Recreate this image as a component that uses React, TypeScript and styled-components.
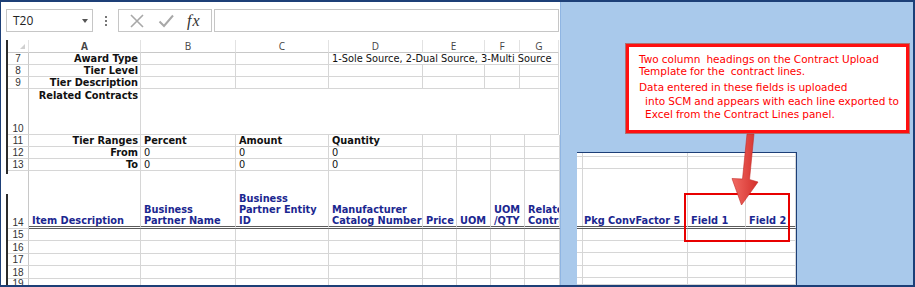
import React from 'react';
import styled, { createGlobalStyle } from 'styled-components';

const GlobalStyle = createGlobalStyle`
  html, body {
    margin: 0;
    padding: 0;
    background: #fff;
  }
  body {
    font-family: 'DejaVu Sans', Verdana, sans-serif;
  }
`;

const CELL_FONT = "'DejaVu Sans', Verdana, sans-serif";
const UI_FONT = "'Open Sans', 'Liberation Sans', sans-serif";

const TOP_COLS = '21px 112px 95px 93px 94px 62px 35px 39px';
const BOTTOM_COLS = '21px 112px 95px 93px 94px 34px 34px 34px 35px';
const SNIPPET_COLS = '4px 107px 58px 50px';

const Frame = styled.div`
  position: relative;
  width: 915px;
  height: 287px;
  box-sizing: border-box;
  border: 2px solid #1d3f77;
  border-left-width: 1px;
  display: flex;
  overflow: hidden;
  background: #fff;
`;

const SheetPane = styled.div`
  width: 559px;
  flex-shrink: 0;
  display: flex;
  flex-direction: column;
  overflow: hidden;
`;

const FormulaBar = styled.div`
  height: 38px;
  flex-shrink: 0;
  box-sizing: border-box;
  padding: 7px 1px 0 5px;
  display: flex;
  align-items: flex-start;
`;

const NameBox = styled.div`
  width: 87px;
  height: 23px;
  box-sizing: border-box;
  border: 1px solid #c6c6c6;
  display: flex;
  align-items: center;
  justify-content: space-between;
  padding: 0 4px 0 6px;
  font: 12px ${UI_FONT};
  color: #222;
`;

const Caret = styled.span`
  width: 0;
  height: 0;
  border-left: 3px solid transparent;
  border-right: 3px solid transparent;
  border-top: 4px solid #555;
`;

const Grip = styled.div`
  width: 25px;
  height: 23px;
  display: flex;
  flex-direction: column;
  align-items: center;
  justify-content: center;
  gap: 2px;

  span {
    width: 2px;
    height: 2px;
    background: #777;
  }
`;

const ActionBox = styled.div`
  width: 94px;
  height: 23px;
  box-sizing: border-box;
  border: 1px solid #c6c6c6;
  display: flex;
  align-items: center;
  justify-content: space-around;
  padding: 0 4px;
`;

const Fx = styled.span`
  font: italic 16px 'Liberation Serif', serif;
  color: #333;
  letter-spacing: 1px;
`;

const FormulaInput = styled.div`
  flex: 1;
  height: 23px;
  box-sizing: border-box;
  margin-left: 2px;
  border: 1px solid #c6c6c6;
`;

const Sheet = styled.div`
  flex: 1;
  min-height: 0;
  display: flex;
  padding-left: 5px;
  overflow: hidden;
`;

const Ruler = styled.div`
  width: 2px;
  flex-shrink: 0;
  background: linear-gradient(
    to bottom,
    #2b2b2b 0 134px,
    transparent 134px 154px,
    #2b2b2b 154px
  );
`;

const Grid = styled.div`
  flex: 1;
  display: flex;
  flex-direction: column;
`;

const Row = styled.div<{ $cols: string; $h?: number }>`
  display: grid;
  grid-template-columns: ${({ $cols }) => $cols};
  height: ${({ $h }) => ($h ? `${$h}px` : 'auto')};
  flex: ${({ $h }) => ($h ? '0 0 auto' : '1')};
`;

const ColHead = styled.div<{ $active?: boolean }>`
  box-sizing: border-box;
  border-right: 1px solid #e2e2e2;
  border-bottom: 1px solid #c8c8c8;
  display: flex;
  align-items: center;
  justify-content: center;
  font: ${({ $active }) => ($active ? 700 : 400)} 10px/1 ${UI_FONT};
  color: #444;
`;

const Corner = styled(ColHead)`
  justify-content: flex-end;
  align-items: flex-end;
  padding: 0 3px 3px 0;

  &::after {
    content: '';
    border-left: 5px solid transparent;
    border-bottom: 5px solid #d0d0d0;
  }
`;

type Align = 'left' | 'right' | 'center';

const Cell = styled.div<{
  $align?: Align;
  $top?: boolean;
  $bold?: boolean;
  $navy?: boolean;
  $span?: number;
  $double?: boolean;
}>`
  box-sizing: border-box;
  min-width: 0;
  border-right: 1px solid #d6d6d6;
  border-bottom: ${({ $double }) => ($double ? '3px double #5a5a5a' : '1px solid #d6d6d6')};
  grid-column: ${({ $span }) => ($span ? `span ${$span}` : 'auto')};
  display: flex;
  align-items: ${({ $top }) => ($top ? 'flex-start' : 'flex-end')};
  justify-content: ${({ $align }) =>
    $align === 'right' ? 'flex-end' : $align === 'center' ? 'center' : 'flex-start'};
  text-align: ${({ $align }) => $align || 'left'};
  padding: ${({ $top }) => ($top ? '1px 2px 0 3px' : '0 2px 0 3px')};
  font: ${({ $bold }) => ($bold ? 700 : 400)} 9.8px/11px ${CELL_FONT};
  color: ${({ $navy }) => ($navy ? '#1b2790' : '#111')};
  white-space: nowrap;
  overflow: hidden;
`;

const RowNum = styled.div`
  box-sizing: border-box;
  border-right: 1px solid #c8c8c8;
  border-bottom: 1px solid #d6d6d6;
  display: flex;
  align-items: flex-end;
  justify-content: center;
  font: 10px/10px 'Liberation Sans', Arial, sans-serif;
  color: #333;
`;

const BluePane = styled.div`
  flex: 1;
  background: #a9c9eb;
  border-left: 1px solid #8fb5e3;
  display: flex;
  flex-direction: column;
  padding-top: 42px;
`;

const Callout = styled.div`
  margin-left: 65px;
  width: 283px;
  height: 89px;
  flex-shrink: 0;
  box-sizing: border-box;
  background: #fff;
  border: 3px solid #ff1010;
  box-shadow: 0 0 0 1px #b07070;
  padding: 6px 0 0 10px;
  color: #ff0000;
  font: 10.5px ${CELL_FONT};
  word-spacing: -0.3px;
`;

const CalloutPara = styled.p<{ $gap?: number }>`
  margin: ${({ $gap }) => $gap || 0}px 0 0;
  line-height: ${({ $gap }) => ($gap ? 13.5 : 12)}px;
  white-space: pre;
`;

const Snippet = styled.div`
  margin: 19px 0 0 16px;
  width: 220px;
  flex: 1;
  box-sizing: border-box;
  background: #fff;
  border-top: 1px solid #1d3f77;
  border-right: 1px solid #1d3f77;
  display: flex;
  flex-direction: column;
`;

const Highlight = styled.div`
  position: absolute;
  left: 683px;
  top: 191px;
  width: 106px;
  height: 49px;
  box-sizing: border-box;
  border: 2px solid #e80000;
`;

const Arrow = styled.svg`
  position: absolute;
  left: 724px;
  top: 129px;
`;

const topRows = [
  { n: '7', label: 'Award Type' },
  { n: '8', label: 'Tier Level' },
  { n: '9', label: 'Tier Description' },
];

const tierRows = [
  { n: '11', label: 'Tier Ranges', values: ['Percent', 'Amount', 'Quantity'], bold: true },
  { n: '12', label: 'From', values: ['0', '0', '0'], bold: false },
  { n: '13', label: 'To', values: ['0', '0', '0'], bold: false },
];

const lineHeaders: React.ReactNode[] = [
  'Item Description',
  <span key="b">Business<br />Partner Name</span>,
  <span key="c">Business<br />Partner Entity<br />ID</span>,
  <span key="d">Manufacturer<br />Catalog Number</span>,
  'Price',
  'UOM',
  <span key="q">UOM<br />/QTY</span>,
  <span key="r">Related<br />Contracts</span>,
];

const emptyRows = [
  { n: '15', h: 12 },
  { n: '16', h: 13 },
  { n: '17', h: 12 },
  { n: '18', h: 13 },
  { n: '19', h: 0 },
];

const blanks = (count: number, prefix: string) =>
  Array.from({ length: count }, (_, i) => <Cell key={`${prefix}_${i}`} />);

const CancelIcon = () => (
  <svg width="16" height="16" viewBox="0 0 16 16">
    <path d="M2 2 L14 14 M14 2 L2 14" stroke="#a8a8a8" strokeWidth="1.6" fill="none" />
  </svg>
);

const EnterIcon = () => (
  <svg width="16" height="16" viewBox="0 0 16 16">
    <path d="M1.5 8.5 L6 13 L15 2.5" stroke="#a8a8a8" strokeWidth="2" fill="none" />
  </svg>
);

const App: React.FC = () => (
  <>
    <GlobalStyle />
    <Frame>
      <SheetPane>
        <FormulaBar>
          <NameBox>
            T20
            <Caret />
          </NameBox>
          <Grip>
            <span />
            <span />
            <span />
          </Grip>
          <ActionBox>
            <CancelIcon />
            <EnterIcon />
            <Fx>fx</Fx>
          </ActionBox>
          <FormulaInput />
        </FormulaBar>

        <Sheet>
          <Ruler />
          <Grid>
            <Row $cols={TOP_COLS} $h={13}>
              <Corner />
              <ColHead $active>A</ColHead>
              {['B', 'C', 'D', 'E', 'F', 'G'].map((col) => (
                <ColHead key={col}>{col}</ColHead>
              ))}
            </Row>

            {topRows.map((row, i) => (
              <Row key={row.n} $cols={TOP_COLS} $h={12}>
                <RowNum>{row.n}</RowNum>
                <Cell $align="right" $bold>
                  {row.label}
                </Cell>
                {blanks(2, `top${row.n}`)}
                {i === 0 ? (
                  <Cell $span={4}>1-Sole Source, 2-Dual Source, 3-Multi Source</Cell>
                ) : (
                  blanks(4, `topr${row.n}`)
                )}
              </Row>
            ))}

            <Row $cols={TOP_COLS} $h={46}>
              <RowNum>10</RowNum>
              <Cell $align="right" $bold $top>
                Related Contracts
              </Cell>
              <Cell $span={6} />
            </Row>

            {tierRows.map((row) => (
              <Row key={row.n} $cols={BOTTOM_COLS} $h={12}>
                <RowNum>{row.n}</RowNum>
                <Cell $align="right" $bold>
                  {row.label}
                </Cell>
                {row.values.map((v, i) => (
                  <Cell key={`${row.n}_${i}`} $bold={row.bold}>
                    {v}
                  </Cell>
                ))}
                {blanks(4, `tier${row.n}`)}
              </Row>
            ))}

            <Row $cols={BOTTOM_COLS} $h={58}>
              <RowNum>14</RowNum>
              {lineHeaders.map((head, i) => (
                <Cell key={`head_${i}`} $bold $navy $double>
                  {head}
                </Cell>
              ))}
            </Row>

            {emptyRows.map((row) => (
              <Row key={row.n} $cols={BOTTOM_COLS} $h={row.h || undefined}>
                <RowNum>{row.n}</RowNum>
                {blanks(8, `empty${row.n}`)}
              </Row>
            ))}
          </Grid>
        </Sheet>
      </SheetPane>

      <BluePane>
        <Callout>
          <CalloutPara>
            {'Two column  headings on the Contract Upload\nTemplate for the  contract lines.'}
          </CalloutPara>
          <CalloutPara $gap={4}>
            {'Data entered in these fields is uploaded\n  into SCM and appears with each line exported to\n  Excel from the Contract Lines panel.'}
          </CalloutPara>
        </Callout>

        <Snippet>
          <Row $cols={SNIPPET_COLS} $h={4}>
            {blanks(4, 'sn_a')}
          </Row>
          <Row $cols={SNIPPET_COLS} $h={12}>
            {blanks(4, 'sn_b')}
          </Row>
          <Row $cols={SNIPPET_COLS} $h={60}>
            <Cell $double />
            <Cell $bold $navy $double>
              Pkg ConvFactor 5
            </Cell>
            <Cell $bold $navy $double>
              Field 1
            </Cell>
            <Cell $bold $navy $double>
              Field 2
            </Cell>
          </Row>
          {[12, 12, 13, 12, 0].map((h, i) => (
            <Row key={`sn_row_${i}`} $cols={SNIPPET_COLS} $h={h || undefined}>
              {blanks(4, `sn_${i}`)}
            </Row>
          ))}
        </Snippet>
      </BluePane>

      <Highlight />
      <Arrow width="40" height="78" viewBox="0 0 40 78">
        <defs>
          <linearGradient id="arrowShade" x1="0" x2="1" y1="0" y2="0">
            <stop offset="0" stopColor="#f26a63" />
            <stop offset="1" stopColor="#d3302c" />
          </linearGradient>
        </defs>
        <polygon
          points="22,3 29,3 24.5,48.5 33,51 16.5,74 7,47.5 17.5,48"
          fill="url(#arrowShade)"
          stroke="#c42a26"
          strokeWidth="0.6"
        />
      </Arrow>
    </Frame>
  </>
);

export default App;
